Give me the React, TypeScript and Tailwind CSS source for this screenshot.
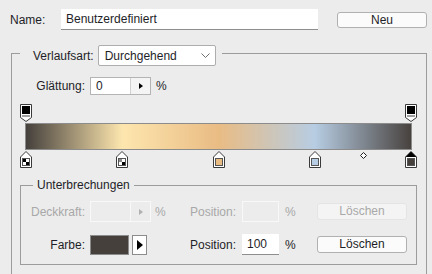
const font = "font-['Liberation_Sans',Arial,sans-serif]";

type Stop = { p: number; color: string; kind: "fg" | "bg" | "color"; selected?: boolean };

const colorStops: Stop[] = [
  { p: 0, color: "#45403c", kind: "fg" },
  { p: 0.25, color: "#fde6ae", kind: "bg" },
  { p: 0.5, color: "#e9bc84", kind: "color" },
  { p: 0.75, color: "#b7cde3", kind: "color" },
  { p: 1, color: "#45403c", kind: "color", selected: true },
];

function OpacityStop({ left }: { left: number }) {
  return (
    <svg className="absolute top-0" style={{ left }} width="12" height="18" viewBox="0 0 12 18">
      <path d="M0.5 0.5H11.5V13.5L6 17.5L0.5 13.5Z" fill="#fff" stroke="#3a3a3a" />
      <rect x="2" y="2" width="8" height="8" fill="#000" />
      <rect x="2" y="11" width="8" height="2" fill="#a0a0a0" />
    </svg>
  );
}

function ColorStop({ stop }: { stop: Stop }) {
  return (
    <svg className="absolute top-[47px]" style={{ left: Math.round(stop.p * 385) - 5 }} width="12" height="17" viewBox="0 0 12 17">
      <path d="M6 0.5L11.5 6V16.5H0.5V6Z" fill="#fff" stroke="#3a3a3a" />
      {stop.selected && <path d="M6 0.5L11.5 6H0.5Z" fill="#000" />}
      {stop.kind === "color" && (
        <rect x="2.5" y="7.5" width="7" height="7" fill={stop.color} stroke="#555" />
      )}
      {stop.kind !== "color" && (
        <g>
          <rect x="2.5" y="7.5" width="7" height="7" fill="#fff" stroke="#555" />
          <rect x="3" y="8" width="3" height="3" fill={stop.kind === "fg" ? "#000" : "#8a8a8a"} />
          <rect x="6" y="11" width="3" height="3" fill="#000" />
        </g>
      )}
    </svg>
  );
}

function SpinField({ value, disabled }: { value?: string; disabled?: boolean }) {
  return (
    <div
      className={`flex w-[61px] h-full border ${
        disabled ? "border-[#f8f8f8] bg-[#ececec]" : "border-[#b4b4b4] bg-white"
      }`}
    >
      <div className="flex-1 flex items-center pl-[5px]">{value}</div>
      <div
        className={`w-[20px] flex items-center justify-center border-l ${
          disabled ? "border-[#f8f8f8]" : "border-[#d0d0d0] bg-[#f4f4f4]"
        }`}
      >
        <svg width="4" height="6" viewBox="0 0 4 6">
          <path d="M0 0L4 3L0 6Z" fill={disabled ? "#b0b0b0" : "#000"} />
        </svg>
      </div>
    </div>
  );
}

export default function App() {
  return (
    <div className={`w-[432px] h-[274px] overflow-hidden bg-[#ececec] text-[12px] text-[#1e1e28] ${font}`}>
      {/* Name row */}
      <div className="mt-[9px] flex items-center h-[21px]">
        <span className="w-[61px] pl-[10px]">Name:</span>
        <div className="w-[257px] h-full bg-white border-b border-[#8e8e8e] flex items-center pl-[5px]">
          Benutzerdefiniert
        </div>
        <button className="ml-[19px] w-[90px] h-[16px] rounded-[3px] border border-[#b0b0b0] bg-[#fbfbfb] leading-[14px]">
          Neu
        </button>
      </div>

      {/* Verlauf group */}
      <div className="ml-[11px] mt-[23px] w-[416px] h-[240px] border-l border-t border-r border-[#9c9c9c]">
        <div className="-mt-[9px] ml-[8px] w-fit flex items-center h-[21px] bg-[#ececec] pl-[13px] pr-[6px]">
          <span>Verlaufsart:</span>
          <div className="ml-[4px] w-[118px] h-full bg-white border border-[#adadad] rounded-[2px] flex items-center justify-between pl-[6px] pr-[5px]">
            <span>Durchgehend</span>
            <svg width="9" height="5" viewBox="0 0 9 5">
              <path d="M0.5 0.5L4.5 4.5L8.5 0.5" fill="none" stroke="#707070" />
            </svg>
          </div>
        </div>

        <div className="mt-[11px] flex items-center h-[18px]">
          <span className="w-[73px] text-right">Glättung:</span>
          <div className="ml-[5px] h-full">
            <SpinField value="0" />
          </div>
          <span className="ml-[5px]">%</span>
        </div>

        {/* Gradient bar with stops */}
        <div className="relative mt-[9px] ml-[13px] w-[387px] h-[64px] pt-[19px]">
          <OpacityStop left={-5} />
          <OpacityStop left={380} />
          <div className="h-[27px] border border-[#8c8c8c] bg-[linear-gradient(to_right,#45403c_0%,#fde6ae_25%,#e9bc84_50%,#b7cde3_75%,#48423f_100%)]" />
          {colorStops.map((s, i) => (
            <ColorStop key={i} stop={s} />
          ))}
          <svg className="absolute top-[48px] left-[335px]" width="7" height="7" viewBox="0 0 7 7">
            <path d="M3.5 0.5L6.5 3.5L3.5 6.5L0.5 3.5Z" fill="#fff" stroke="#222" />
          </svg>
        </div>

        {/* Unterbrechungen */}
        <div className="mt-[17px] ml-[8px] w-[397px] h-[80px] border border-[#9c9c9c]">
          <div className="-mt-[8px] ml-[12px] w-fit px-[4px] h-[14px] leading-[14px] bg-[#ececec]">
            Unterbrechungen
          </div>

          <div className="mt-[9px] flex items-center h-[21px] text-[#a8a8a8]">
            <span className="w-[64px] text-right">Deckkraft:</span>
            <div className="ml-[5px] h-full">
              <SpinField disabled />
            </div>
            <span className="ml-[4px] w-[35px]">%</span>
            <span className="w-[52px]">Position:</span>
            <div className="w-[37px] h-full border border-[#f8f8f8]" />
            <span className="ml-[6px] w-[32px]">%</span>
            <button className="w-[90px] h-[17px] rounded-[3px] border border-[#e4e4e4] bg-[#f4f4f4] leading-[15px]">
              Löschen
            </button>
          </div>

          <div className="mt-[12px] flex items-center h-[21px]">
            <span className="w-[64px] text-right">Farbe:</span>
            <div className="ml-[5px] w-[61px] flex items-center gap-[3px]">
              <div className="w-[39px] h-[20px] border border-[#8c8c8c] bg-[#45403c]" />
              <div className="w-[15px] h-[20px] border border-[#8c8c8c] bg-white flex items-center justify-center">
                <svg width="6" height="10" viewBox="0 0 6 10">
                  <path d="M0 0L6 5L0 10Z" fill="#000" />
                </svg>
              </div>
            </div>
            <span className="ml-[4px] w-[35px]" />
            <span className="w-[52px]">Position:</span>
            <div className="w-[37px] h-full bg-white border-b border-[#8e8e8e] flex items-center pl-[5px]">100</div>
            <span className="ml-[6px] w-[32px]">%</span>
            <button className="w-[90px] h-[17px] rounded-[3px] border border-[#b0b0b0] bg-[#fbfbfb] leading-[15px]">
              Löschen
            </button>
          </div>
        </div>
      </div>
    </div>
  );
}
